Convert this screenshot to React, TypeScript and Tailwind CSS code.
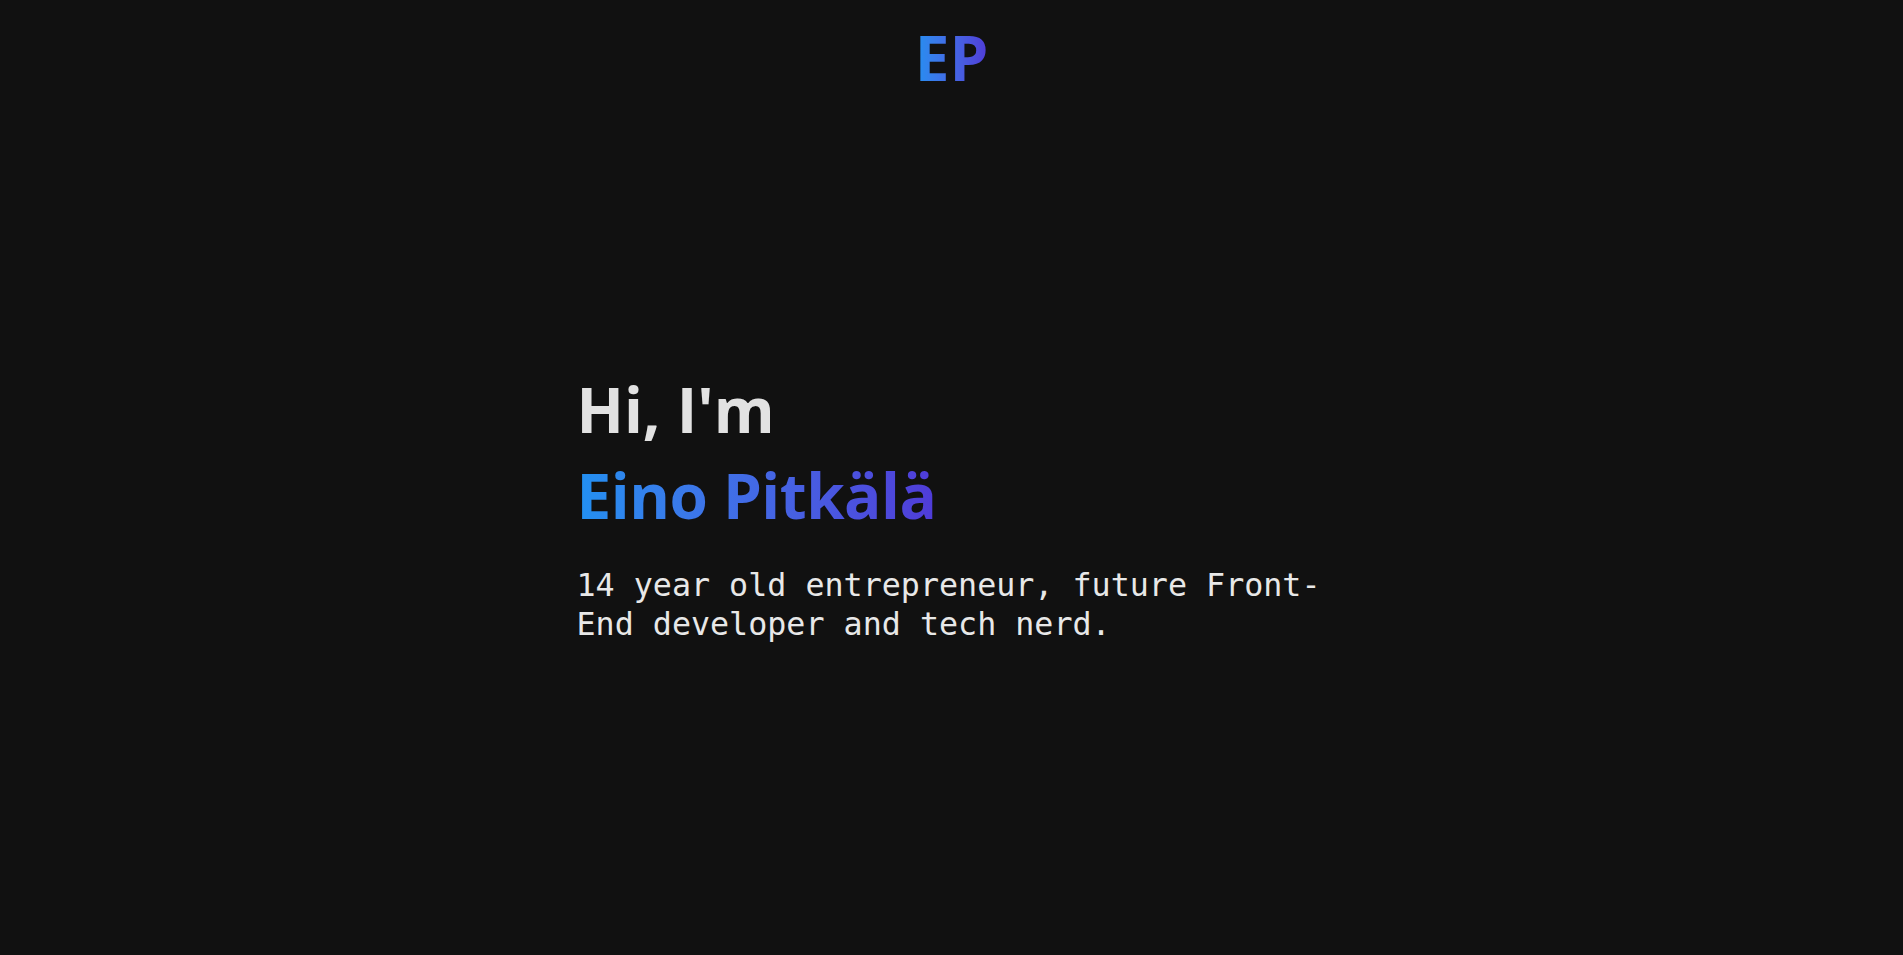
import React from 'react';

const App: React.FC = () => {
  return (
    <div className="min-h-screen bg-[#111111] text-[#e2e2e2] font-['Open_Sans',sans-serif]">
      <header className="flex justify-center pt-[16px]">
        <a href="#" className="text-[62px] font-bold leading-[82px] bg-linear-to-r from-[#2190f1] to-[#4f3bd8] bg-clip-text text-transparent">
          EP
        </a>
      </header>

      <main className="w-[750px] mx-auto pt-[268px]">
        <h1 className="text-[62px] font-bold leading-[86px] text-[#e2e2e2]">Hi, I'm</h1>
        <h2 className="text-[62px] font-bold leading-[86px] tracking-[-0.5px]">
          <span className="bg-linear-to-r from-[#2190f1] to-[#4f3bd8] bg-clip-text text-transparent">
            Eino Pitkälä
          </span>
        </h2>
        <p className="mt-[28px] text-[31.7px] leading-[39px] font-['DejaVu_Sans_Mono',monospace] text-[#e8e8e8]">
          14 year old entrepreneur, future Front-End developer and tech nerd.
        </p>
      </main>
    </div>
  );
};

export default App;
